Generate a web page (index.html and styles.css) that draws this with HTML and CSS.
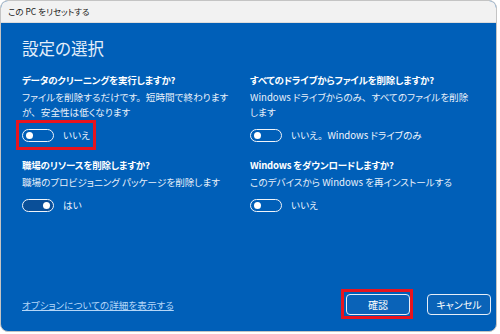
FILE: index.html
```html
<!DOCTYPE html>
<html lang="ja">
<head>
<meta charset="utf-8">
<link rel="stylesheet" href="styles.css">
</head>
<body>
<div class="window">
  <div class="titlebar">この PC をリセットする</div>
  <div class="content">
    <h1 class="title">設定の選択</h1>
    <div class="grid">
      <div class="item">
        <div class="q">データのクリーニングを実行しますか?</div>
        <div class="desc">ファイルを削除するだけです。&ensp;短時間で終わりますが、&ensp;安全性は低くなります</div>
        <div class="toggle-row">
          <span class="toggle"><span class="knob"></span></span>
          <span class="label">いいえ</span>
          <span class="mark mark-toggle"></span>
        </div>
      </div>
      <div class="item">
        <div class="q">すべてのドライブからファイルを削除しますか?</div>
        <div class="desc">Windows ドライブからのみ、&ensp;すべてのファイルを削除します</div>
        <div class="toggle-row">
          <span class="toggle"><span class="knob"></span></span>
          <span class="label">いいえ。&ensp;Windows ドライブのみ</span>
        </div>
      </div>
      <div class="item">
        <div class="q">職場のリソースを削除しますか?</div>
        <div class="desc">職場のプロビジョニング パッケージを削除します</div>
        <div class="toggle-row">
          <span class="toggle on"><span class="knob"></span></span>
          <span class="label">はい</span>
        </div>
      </div>
      <div class="item">
        <div class="q">Windows をダウンロードしますか?</div>
        <div class="desc">このデバイスから Windows を再インストールする</div>
        <div class="toggle-row">
          <span class="toggle"><span class="knob"></span></span>
          <span class="label">いいえ</span>
        </div>
      </div>
    </div>
    <div class="footer">
      <a class="link" href="#">オプションについての詳細を表示する</a>
      <div class="buttons">
        <span class="btn-wrap"><button class="btn">確認</button><span class="mark mark-btn"></span></span>
        <button class="btn">キャンセル</button>
      </div>
    </div>
  </div>
</div>
</body>
</html>
```
FILE: styles.css
```css
* { box-sizing: border-box; }
html, body { margin: 0; padding: 0; background: #ffffff; }
body {
  font-family: "Noto Sans CJK JP", "Noto Sans", sans-serif;
  font-feature-settings: "palt" 1;
  width: 500px;
  height: 334px;
}
.window {
  width: 497px;
  height: 332px;
  border: 1px solid #c4c4c4;
  border-radius: 8px;
  overflow: hidden;
  display: flex;
  flex-direction: column;
  background: #005fb8;
}
.titlebar {
  height: 22px;
  flex: none;
  background: #f2f2f2;
  border-bottom: 1px solid #dcdcdc;
  color: #1a1a1a;
  font-size: 8.5px;
  line-height: 21px;
  padding-left: 7px;
}
.content {
  flex: 1;
  display: flex;
  flex-direction: column;
  padding: 13px 5px 16px 21px;
  color: #ffffff;
}
.title {
  margin: 0;
  font-size: 16.5px;
  font-weight: 400;
  line-height: 24px;
  color: #e4eefa;
}
.grid {
  margin-top: 12px;
  display: grid;
  grid-template-columns: 218px 222px;
  column-gap: 10px;
  row-gap: 15px;
}
.q {
  font-size: 9.5px;
  letter-spacing: -0.2px;
  font-weight: 700;
  line-height: 16px;
  margin-bottom: 2px;
}
.desc {
  font-size: 9.6px;
  line-height: 15px;
  color: #e8f0fa;
}
.toggle-row {
  position: relative;
  margin-top: 8px;
  height: 14px;
  display: flex;
  align-items: center;
  gap: 9px;
}
.toggle {
  width: 32px;
  height: 13px;
  border: 1.5px solid #f0f4fa;
  border-radius: 7px;
  display: flex;
  align-items: center;
  padding: 0 3px;
  flex: none;
}
.toggle.on { justify-content: flex-end; background: #0a4f98; }
.knob {
  width: 7px;
  height: 7px;
  border-radius: 50%;
  background: #ffffff;
}
.label {
  font-size: 9.6px;
  line-height: 14px;
  color: #f2f6fc;
}
.mark {
  position: absolute;
  border: 3px solid #e8141e;
}
.mark-toggle {
  left: -6px;
  top: -8px;
  width: 80px;
  height: 30px;
}
.footer {
  margin-top: auto;
  display: flex;
  justify-content: space-between;
  align-items: center;
}
.link {
  font-size: 9.6px;
  color: #b4d6f8;
  text-decoration: underline;
  line-height: 14px;
}
.buttons {
  display: flex;
  gap: 17px;
}
.btn-wrap { position: relative; display: flex; }
.btn {
  width: 64px;
  height: 21px;
  background: #0a63b8;
  border: 1px solid #e6eef8;
  border-radius: 4px;
  color: #ffffff;
  font-family: inherit;
  font-feature-settings: "palt" 1;
  font-size: 10px;
  padding: 0;
}
.mark-btn {
  left: -5px;
  top: -5px;
  width: 72px;
  height: 30px;
}
```
